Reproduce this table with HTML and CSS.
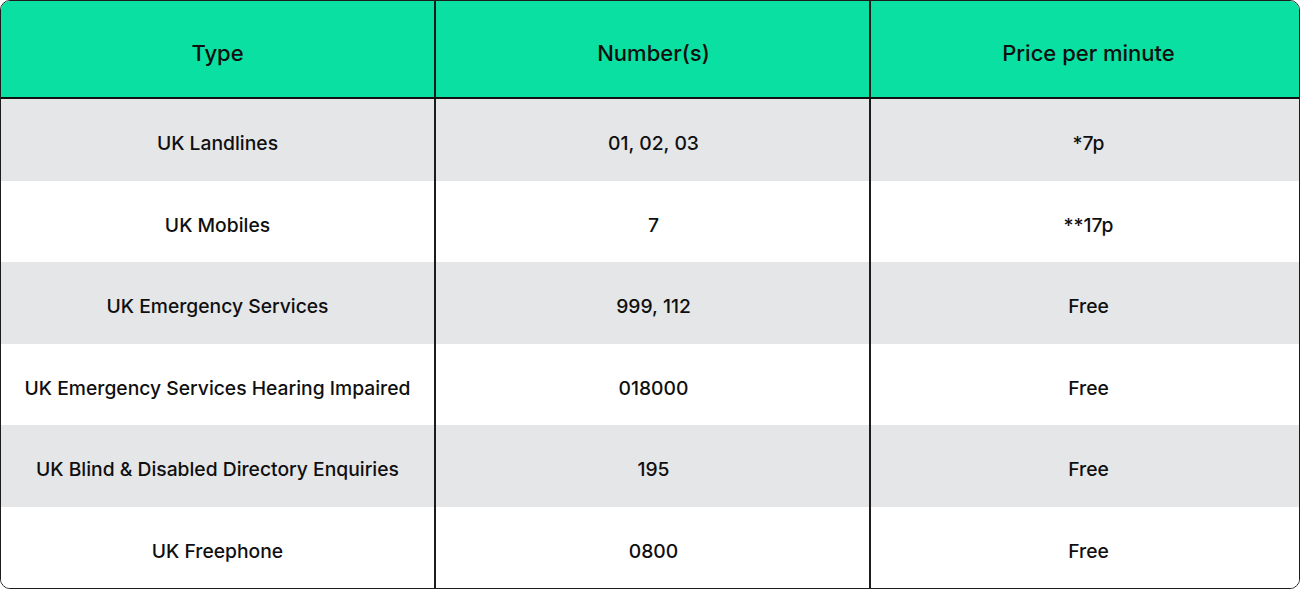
FILE: index.html
```html
<!DOCTYPE html>
<html>
<head>
<meta charset="utf-8">
<link rel="stylesheet" href="styles.css">
</head>
<body>
<div class="table">
  <div class="row head">
    <div class="cell">Type</div>
    <div class="cell">Number(s)</div>
    <div class="cell">Price per minute</div>
  </div>
  <div class="row gray">
    <div class="cell">UK Landlines</div>
    <div class="cell">01, 02, 03</div>
    <div class="cell">*7p</div>
  </div>
  <div class="row">
    <div class="cell">UK Mobiles</div>
    <div class="cell">7</div>
    <div class="cell">**17p</div>
  </div>
  <div class="row gray">
    <div class="cell">UK Emergency Services</div>
    <div class="cell">999, 112</div>
    <div class="cell">Free</div>
  </div>
  <div class="row">
    <div class="cell">UK Emergency Services Hearing Impaired</div>
    <div class="cell">018000</div>
    <div class="cell">Free</div>
  </div>
  <div class="row gray">
    <div class="cell">UK Blind &amp; Disabled Directory Enquiries</div>
    <div class="cell">195</div>
    <div class="cell">Free</div>
  </div>
  <div class="row">
    <div class="cell">UK Freephone</div>
    <div class="cell">0800</div>
    <div class="cell">Free</div>
  </div>
</div>
</body>
</html>
```

FILE: styles.css
```css
html, body {
  margin: 0;
  padding: 0;
  background: #ffffff;
}
body {
  font-family: Inter, "Liberation Sans", sans-serif;
  color: #0f0f0f;
}
.table {
  box-sizing: border-box;
  width: 1300px;
  height: 589px;
  border: 1px solid #1c1c1c;
  border-radius: 10px;
  overflow: hidden;
  display: grid;
  grid-template-rows: 98px repeat(6, 1fr);
}
.row {
  display: grid;
  grid-template-columns: 435px 435px 1fr;
  background: #ffffff;
}
.row.gray {
  background: #e5e6e8;
}
.row.head {
  background: #0ae0a1;
  border-bottom: 2px solid #111111;
}
.cell {
  display: flex;
  align-items: center;
  justify-content: center;
  font-size: 19.3px;
  font-weight: 500;
  padding-top: 7px;
  border-right: 2px solid #1c1c1c;
}
.cell:nth-child(2) {
  padding-left: 2px;
}
.cell:last-child {
  border-right: none;
  padding-left: 7px;
}
.head .cell {
  font-size: 22px;
  font-weight: 500;
  padding-top: 8px;
}
```
